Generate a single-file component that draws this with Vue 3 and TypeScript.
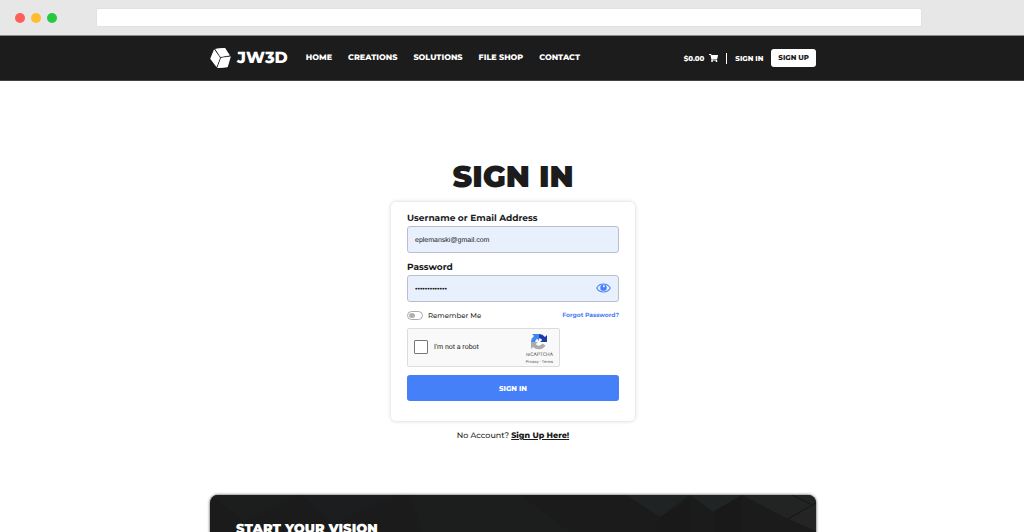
<script setup lang="ts">
import { ref } from 'vue'

const links: string[] = ['Home', 'Creations', 'Solutions', 'File Shop', 'Contact']
const address = ref('')
const email = ref('eplemanski@gmail.com')
const password = ref('examplepasswd')
const remember = ref(false)
const human = ref(false)
const reveal = ref(false)
</script>

<template>
  <div class="window">
    <div class="chrome">
      <div class="lights">
        <span class="light red"></span>
        <span class="light amber"></span>
        <span class="light green"></span>
      </div>
      <input v-model="address" class="address" type="text" aria-label="Address" />
    </div>

    <header class="header">
      <div class="bar">
        <a class="logo" href="#">
          <svg viewBox="0 0 60 60" aria-hidden="true">
            <path d="M15 3 L43 0 L57 22 L30 26 Z" />
            <path d="M11 5 L28 29 L18 56 L0 32 Z" />
            <path d="M32 30 L60 26 L51 57 L21 60 Z" />
            <path d="M15 3 L43 0 L57 22 L30 26 Z M11 5 L28 29 L18 56 L0 32 Z M32 30 L60 26 L51 57 L21 60 Z" stroke="#fff" stroke-width="1" stroke-linejoin="round" />
          </svg>
          <span>JW3D</span>
        </a>
        <nav class="nav">
          <a v-for="link in links" :key="link" href="#">{{ link }}</a>
        </nav>
        <div class="account">
          <a class="cart" href="#">
            <span>$0.00</span>
            <svg viewBox="0 0 576 512" aria-hidden="true">
              <path d="M528 301 576 95c3-15-8-31-24-31H159l-9-44C147 9 137 0 126 0H24C11 0 0 11 0 24v16c0 13 11 24 24 24h70l70 343a56 56 0 1 0 67 9h210a56 56 0 1 0 64-10l5-25c4-15-8-29-23-29H218l-7-32h294c11 0 21-8 23-19z" />
            </svg>
          </a>
          <span class="divider"></span>
          <a class="sign-in" href="#">Sign in</a>
          <a class="sign-up" href="#">Sign up</a>
        </div>
      </div>
    </header>

    <main class="main">
      <h1>Sign in</h1>
      <form class="card" @submit.prevent>
        <label class="label" for="email">Username or Email Address</label>
        <input id="email" v-model="email" class="field" type="text" />

        <label class="label" for="password">Password</label>
        <div class="field-wrap">
          <input id="password" v-model="password" class="field" :type="reveal ? 'text' : 'password'" />
          <button class="eye" type="button" aria-label="Show password" @click="reveal = !reveal">
            <svg viewBox="0 0 42 28" aria-hidden="true">
              <path d="M2 14 C10 -1 32 -1 40 14 C32 29 10 29 2 14 Z" fill="none" stroke="#4680f8" stroke-width="3" />
              <circle cx="21" cy="13" r="9" fill="#4680f8" />
              <circle cx="22" cy="9" r="3" fill="#e8f0fe" />
            </svg>
          </button>
        </div>

        <div class="options">
          <label class="remember">
            <input v-model="remember" type="checkbox" />
            <span>Remember Me</span>
          </label>
          <a class="forgot" href="#">Forgot Password?</a>
        </div>

        <div class="captcha">
          <label class="robot">
            <input v-model="human" type="checkbox" />
            <span>I'm not a robot</span>
          </label>
          <div class="brand">
            <svg viewBox="0 0 64 64" aria-hidden="true">
              <path d="M64 32V4l-8 8A32 32 0 0 0 32 0v17a15 15 0 0 1 13 7l-9 8z" fill="#1c3aa9" />
              <path d="M32 0H4l8 8A32 32 0 0 0 0 32h17a15 15 0 0 1 7-13l8 9z" fill="#4285f4" />
              <path d="M0 32v28l8-8a32 32 0 0 0 50-6L45 38a15 15 0 0 1-26 2l9-8z" fill="#ababab" />
            </svg>
            <span class="brand-name">reCAPTCHA</span>
            <span class="terms"><a href="#">Privacy</a> - <a href="#">Terms</a></span>
          </div>
        </div>

        <button class="submit" type="submit">Sign in</button>
      </form>
      <p class="register">No Account? <a href="#">Sign Up Here!</a></p>
    </main>

    <section class="banner">
      <svg class="facets" viewBox="0 0 606 90" preserveAspectRatio="xMinYMin slice" aria-hidden="true">
        <path d="M0 0H92L34 26Z" fill="#1c1d1d" />
        <path d="M92 0H190L122 28Z" fill="#1b1d1e" />
        <path d="M200 0H310L430 90H230Z" fill="#1c1e1e" />
        <path d="M416 0H480L450 22Z" fill="#202323" />
        <path d="M480 0H532L503 17Z" fill="#212424" />
        <path d="M532 0H606V8L578 24Z" fill="#222424" />
        <path d="M578 24L606 8V36Z" fill="#242424" />
        <path d="M450 22L480 5V90H450ZM503 17L532 0V90H503Z" fill="#191919" />
        <path d="M578 24L606 8M582 0L600 9" stroke="#151515" fill="none" />
      </svg>
      <h2>Start your vision</h2>
    </section>
  </div>
</template>

<style>
body {
  margin: 0;
  background: #fff;
}
</style>

<style scoped>
.window {
  height: 100vh;
  overflow: hidden auto;
  scrollbar-width: none;
  color: #1c1c1c;
  font-family: Montserrat, Inter, "Liberation Sans", sans-serif;
  font-weight: 500;
  text-rendering: geometricPrecision;
}

.window * {
  box-sizing: border-box;
  text-rendering: inherit;
}

a {
  color: inherit;
  text-decoration: none;
}

svg {
  display: block;
}

.chrome {
  display: flex;
  align-items: center;
  gap: 39px;
  height: 36px;
  padding: 0 102px 0 15px;
  background: #e7e7e7;
  border-bottom: 1px solid #8a8a8a;
}

.lights {
  display: flex;
  gap: 6px;
}

.light {
  width: 10px;
  height: 10px;
  border-radius: 50%;
}

.red {
  background: #ff5f57;
}

.amber {
  background: #febc2e;
}

.green {
  background: #28c840;
}

.address {
  flex: 1;
  min-width: 0;
  height: 19px;
  padding: 0 8px;
  border: 1px solid #e2e2e2;
  border-radius: 2px;
  background: #fff;
}

.header {
  padding-left: 2px;
  background: #1c1c1c;
  border-bottom: 1px solid #444;
}

.bar {
  display: flex;
  align-items: center;
  width: 606px;
  max-width: 100%;
  height: 44px;
  margin: 0 auto;
  color: #fff;
  font-size: 8px;
  font-weight: 800;
  text-transform: uppercase;
}

.logo {
  display: flex;
  align-items: center;
  gap: 6px;
  font-size: 16px;
  font-weight: 800;
}

.logo svg {
  width: 21px;
  height: 20px;
  fill: #fff;
}

.nav {
  display: flex;
  gap: 16px;
  margin-left: 18px;
  line-height: 12px;
}

.account {
  display: flex;
  align-items: center;
  gap: 8px;
  margin-left: auto;
  font-size: 7px;
}

.cart {
  display: flex;
  align-items: center;
  gap: 5px;
}

.cart svg {
  width: 9px;
  height: 8px;
  fill: #fff;
}

.divider {
  width: 1px;
  height: 11px;
  background: #fff;
}

.sign-up {
  padding: 0 7px;
  border-radius: 3px;
  background: #fff;
  color: #1c1c1c;
  line-height: 18px;
}

.main {
  display: flex;
  flex-direction: column;
  align-items: center;
  padding: 77px 0 52px 2px;
}

h1 {
  margin: 0;
  font-size: 30px;
  font-weight: 900;
  line-height: 38px;
  text-transform: uppercase;
}

.card {
  display: flex;
  flex-direction: column;
  width: 244px;
  margin-top: 6px;
  padding: 10px 16px 20px;
  border-radius: 5px;
  background: #fff;
  box-shadow: 0 0 4px rgba(0, 0, 0, 0.18);
}

.label {
  font-size: 9px;
  font-weight: 700;
  line-height: 14px;
}

.field {
  width: 100%;
  height: 27px;
  margin-bottom: 8px;
  padding: 1px 7px 0;
  border: 1px solid #b9bfcb;
  border-radius: 3px;
  background: #e8f0fe;
  color: #1c1c1c;
  font-family: "Liberation Sans", Arial, sans-serif;
  font-size: 7px;
}

.field-wrap {
  position: relative;
}

.eye {
  position: absolute;
  top: 8px;
  right: 8px;
  padding: 0;
  border: 0;
  background: none;
}

.eye svg {
  width: 15px;
  height: 10px;
}

.options {
  display: flex;
  align-items: center;
  justify-content: space-between;
  height: 10px;
  margin-bottom: 8px;
  font-size: 7px;
}

.remember {
  display: flex;
  align-items: center;
  gap: 5px;
  color: #333;
}

.remember input {
  appearance: none;
  width: 16px;
  height: 9px;
  margin: 0;
  padding: 1px;
  border: 1px solid #aaa;
  border-radius: 5px;
}

.remember input::before {
  display: block;
  width: 6px;
  height: 5px;
  border-radius: 50%;
  background: #b0b0b0;
  content: "";
}

.remember input:checked::before {
  margin-left: auto;
  background: #4680f8;
}

.forgot {
  color: #4680f8;
  font-size: 6px;
  font-weight: 700;
}

.captcha {
  display: flex;
  align-items: center;
  justify-content: space-between;
  width: 153px;
  height: 39px;
  padding: 2px 6px 0;
  border: 1px solid #dcdcdc;
  border-radius: 2px;
  background: #f9f9f9;
  font-family: Roboto, sans-serif;
  font-weight: 400;
}

.robot {
  display: flex;
  align-items: center;
  gap: 6px;
  padding-bottom: 3px;
  color: #222;
  font-size: 7px;
}

.robot input {
  appearance: none;
  width: 14px;
  height: 14px;
  margin: 0;
  border: 1px solid #777;
  border-radius: 1px;
  background: #fff;
}

.robot input:checked {
  background: #4680f8;
}

.brand {
  display: flex;
  flex-direction: column;
  align-items: center;
  padding-top: 2px;
  color: #555;
}

.brand svg {
  width: 16px;
  height: 16px;
}

.brand-name {
  margin-top: 2px;
  font-size: 5px;
  line-height: 7px;
}

.terms {
  font-size: 4px;
  line-height: 6px;
}

.submit {
  height: 26px;
  margin-top: 8px;
  border: 0;
  border-radius: 3px;
  background: #4680f8;
  color: #fff;
  font-family: inherit;
  font-size: 7px;
  font-weight: 800;
  text-transform: uppercase;
}

.register {
  margin: 8px 0 0;
  font-size: 8px;
  line-height: 14px;
}

.register a {
  font-weight: 800;
  text-decoration: underline;
}

.banner {
  position: relative;
  width: 606px;
  max-width: 100%;
  height: 90px;
  margin: 0 auto;
  left: 1px;
  padding: 26px;
  overflow: hidden;
  border-radius: 8px 8px 0 0;
  background: #1b1b1b;
  box-shadow: 0 0 3px rgba(0, 0, 0, 0.8);
}

.facets {
  position: absolute;
  inset: 0;
  width: 100%;
  height: 100%;
}

h2 {
  position: relative;
  margin: 0;
  color: #fff;
  font-size: 13px;
  font-weight: 900;
  line-height: 16px;
  text-transform: uppercase;
}
</style>
